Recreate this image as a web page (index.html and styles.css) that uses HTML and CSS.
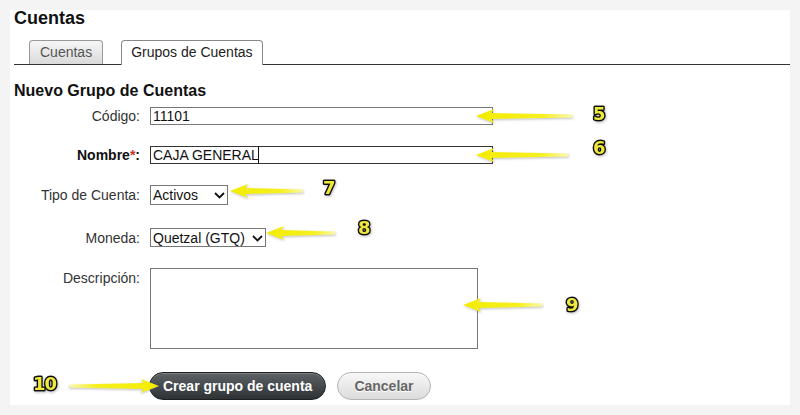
FILE: index.html
```html
<!DOCTYPE html>
<html>
<head>
    <title>Cuentas</title>
    <link rel="stylesheet" href="styles.css">
</head>
<body>
    <div class="page">
        <h1 class="page-title">Cuentas</h1>

        <ul class="tabs">
            <li class="tab">Cuentas</li>
            <li class="tab active">Grupos de Cuentas</li>
        </ul>

        <h2 class="section-title">Nuevo Grupo de Cuentas</h2>

        <form class="form">
            <div class="row">
                <label class="label" for="codigo">Código:</label>
                <input class="input" id="codigo" type="text" value="11101">
            </div>

            <div class="row">
                <label class="label bold" for="nombre">Nombre<span class="req">*</span>:</label>
                <span class="field-wrap">
                    <input class="input input-focus" id="nombre" type="text" value="CAJA GENERAL">
                    <span class="caret"></span>
                </span>
            </div>

            <div class="row">
                <label class="label" for="tipo">Tipo de Cuenta:</label>
                <span class="select-wrap">
                    <select class="select select-tipo" id="tipo">
                        <option>Activos</option>
                        <option>Pasivos</option>
                        <option>Capital</option>
                    </select>
                    <svg class="chevron" width="11" height="7" viewBox="0 0 11 7"><path d="M1 1l4.5 4.5L10 1" fill="none" stroke="#111" stroke-width="1.8"/></svg>
                </span>
            </div>

            <div class="row row-spaced">
                <label class="label" for="moneda">Moneda:</label>
                <span class="select-wrap">
                    <select class="select select-moneda" id="moneda">
                        <option>Quetzal (GTQ)</option>
                        <option>Dólar (USD)</option>
                    </select>
                    <svg class="chevron" width="11" height="7" viewBox="0 0 11 7"><path d="M1 1l4.5 4.5L10 1" fill="none" stroke="#111" stroke-width="1.8"/></svg>
                </span>
            </div>

            <div class="row row-top">
                <label class="label" for="descripcion">Descripción:</label>
                <textarea class="textarea" id="descripcion"></textarea>
            </div>

            <div class="actions">
                <button type="button" class="btn btn-dark">Crear grupo de cuenta</button>
                <button type="button" class="btn btn-light">Cancelar</button>
            </div>
        </form>
    </div>

    <!-- flechas y numeros de ayuda -->
    <svg class="notes" width="800" height="415" viewBox="0 0 800 415">
        <defs>
            <linearGradient id="arrowFill" x1="0" y1="0" x2="1" y2="0">
                <stop offset="0" stop-color="#f3ec00"/>
                <stop offset="0.7" stop-color="#f6f020"/>
                <stop offset="1" stop-color="#fbf8a8"/>
            </linearGradient>
            <filter id="soft" x="-20%" y="-80%" width="140%" height="260%">
                <feDropShadow dx="0.8" dy="1.2" stdDeviation="1" flood-color="#777" flood-opacity="0.45"/>
            </filter>
        </defs>

        <g class="arrow" transform="translate(476 116)"><path d="M0 0L18 -7L15.5 -3L96 -1.5L96 1.5L15.5 3L18 7Z"/></g>
        <g class="arrow" transform="translate(476 155)"><path d="M0 0L18 -7L15.5 -3L92 -1.5L92 1.5L15.5 3L18 7Z"/></g>
        <g class="arrow" transform="translate(230 191)"><path d="M0 0L18 -7L15.5 -3L73 -1.5L73 1.5L15.5 3L18 7Z"/></g>
        <g class="arrow" transform="translate(266 233)"><path d="M0 0L18 -7L15.5 -3L69 -1.5L69 1.5L15.5 3L18 7Z"/></g>
        <g class="arrow" transform="translate(463 305)"><path d="M0 0L18 -7L15.5 -3L79 -1.5L79 1.5L15.5 3L18 7Z"/></g>
        <g class="arrow" transform="translate(159 386) scale(-1 1)"><path d="M0 0L18 -7L15.5 -3L89 -1.5L89 1.5L15.5 3L18 7Z"/></g>

        <text class="num" x="593" y="120">5</text>
        <text class="num" x="593" y="154">6</text>
        <text class="num" x="323" y="194">7</text>
        <text class="num" x="358" y="234">8</text>
        <text class="num" x="566" y="311">9</text>
        <text class="num" x="33" y="390">10</text>
    </svg>
</body>
</html>
```

FILE: styles.css
```css
body {
    margin: 0;
    position: relative;
    background-color: #f4f4f4;
    font-family: "Liberation Sans", Arial, sans-serif;
    color: #333;
}
.page {
    margin: 10px 10px 0;
    height: 395px;
    padding-left: 4px;
    background: white;
}
.page-title {
    margin: 0;
    font-size: 18px;
    line-height: 16px;
    color: #111;
}
.tabs {
    list-style: none;
    margin: 14px 0 0;
    padding: 0 0 0 15px;
    display: flex;
    align-items: flex-end;
    gap: 18px;
    border-bottom: 1px solid #333;
}
.tab {
    box-sizing: border-box;
    height: 24px;
    padding: 0 10px;
    border: 1px solid #999;
    border-bottom: none;
    border-radius: 4px 4px 0 0;
    background: linear-gradient(#f6f6f6, #dadada);
    font-size: 14px;
    line-height: 23px;
    color: #555;
}
.tab.active {
    height: 25px;
    margin-bottom: -1px;
    padding: 0 9px;
    border-color: #888;
    background: white;
    color: #222;
}
.section-title {
    margin: 17px 0 0;
    font-size: 16px;
    line-height: 18px;
    color: #111;
}
.form {
    display: flex;
    flex-direction: column;
    gap: 21px;
    margin-top: 7px;
}
.row {
    display: flex;
    align-items: center;
    gap: 10px;
}
.row-spaced {
    margin-top: 2px;
}
.row-top {
    align-items: flex-start;
}
.row-top .label {
    padding-top: 2px;
}
.label {
    width: 126px;
    text-align: right;
    font-size: 14px;
    line-height: 16px;
    color: #333;
}
.bold {
    font-weight: bold;
    color: #111;
}
.req {
    color: #c0392b;
}
.input {
    box-sizing: border-box;
    width: 343px;
    height: 18px;
    margin: 0;
    padding: 0 2px;
    border: 1px solid #777;
    border-radius: 0;
    font: 14px "Liberation Sans", Arial, sans-serif;
    color: #111;
    outline: none;
}
.input-focus {
    border-color: #333;
}
.field-wrap,
.select-wrap {
    position: relative;
    display: inline-block;
    line-height: 0;
}
.caret {
    position: absolute;
    left: 108px;
    top: 0;
    bottom: 0;
    width: 1px;
    background: #111;
}
.select {
    box-sizing: border-box;
    margin: 0;
    padding: 0 2px;
    border: 1px solid #777;
    border-radius: 0;
    background: white;
    font: 14px "Liberation Sans", Arial, sans-serif;
    color: #111;
    -webkit-appearance: none;
    appearance: none;
    outline: none;
}
.select-tipo {
    width: 78px;
    height: 20px;
}
.select-moneda {
    width: 116px;
    height: 19px;
}
.chevron {
    position: absolute;
    right: 3px;
    top: 50%;
    margin-top: -3px;
    pointer-events: none;
}
.textarea {
    box-sizing: border-box;
    width: 328px;
    height: 81px;
    margin: 0;
    border: 1px solid #777;
    border-radius: 0;
    resize: none;
    outline: none;
}
.actions {
    display: flex;
    gap: 11px;
    margin: 2px 0 0 135px;
}
.btn {
    box-sizing: border-box;
    height: 28px;
    border-radius: 14px;
    font: bold 14px "Liberation Sans", Arial, sans-serif;
    line-height: 26px;
    cursor: pointer;
}
.btn-dark {
    padding: 0 13px;
    border: 1px solid #1d1f21;
    background: linear-gradient(#5d6266, #2e3235);
    box-shadow: inset 0 1px 0 rgba(255,255,255,0.2);
    color: white;
}
.btn-light {
    padding: 0 16px;
    border: 1px solid #b4b4b4;
    background: linear-gradient(#f8f8f8, #dbdbdb);
    color: #666;
    text-shadow: 0 1px 0 #fff;
}
.notes {
    position: absolute;
    top: 0;
    left: 0;
    pointer-events: none;
}
.arrow path {
    fill: url(#arrowFill);
    filter: url(#soft);
}
.num {
    font: bold 18px "DejaVu Sans", sans-serif;
    letter-spacing: -1px;
    fill: #efe93a;
    stroke: #111;
    stroke-width: 3px;
    stroke-linejoin: round;
    paint-order: stroke;
    filter: url(#soft);
}
```
